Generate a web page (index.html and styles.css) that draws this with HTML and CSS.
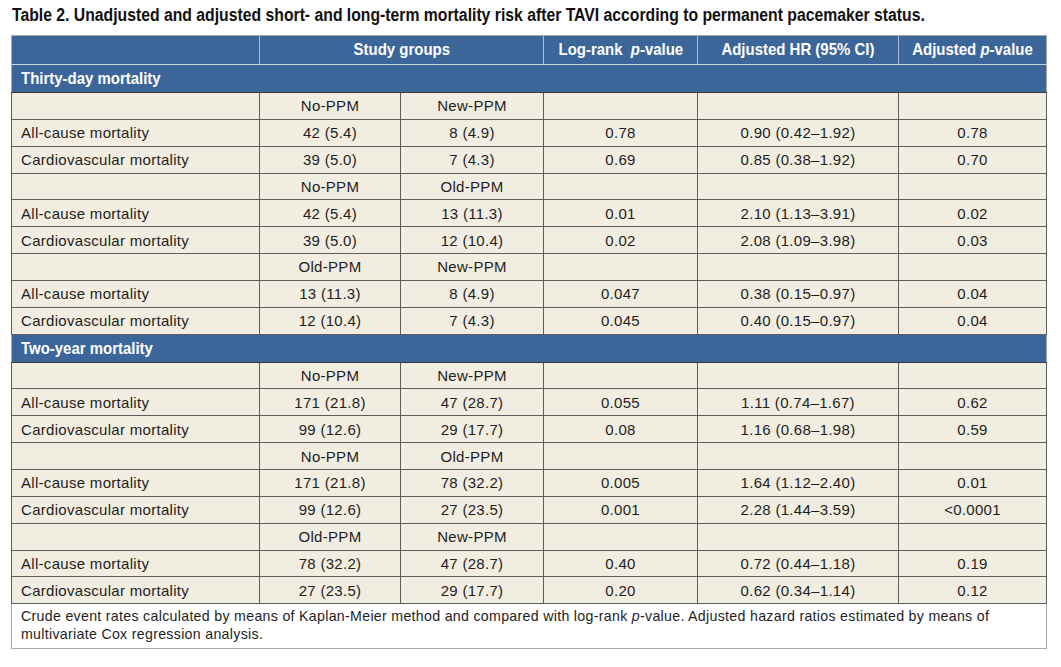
FILE: index.html
```html
<!DOCTYPE html>
<html lang="en">
<head>
<meta charset="utf-8">
<title>Table 2</title>
<link rel="stylesheet" href="styles.css">
</head>
<body>
<h1 class="caption"><span class="cond cond-left">Table 2. Unadjusted and adjusted short- and long-term mortality risk after TAVI according to permanent pacemaker status.</span></h1>
<table class="data">
  <colgroup>
    <col class="c-label"><col class="c-g1"><col class="c-g2"><col class="c-lr"><col class="c-hr"><col class="c-ap">
  </colgroup>
  <thead>
    <tr class="head">
      <th></th>
      <th colspan="2"><span class="cond">Study groups</span></th>
      <th><span class="cond">Log-rank&nbsp; <i>p</i>-value</span></th>
      <th><span class="cond">Adjusted HR (95% CI)</span></th>
      <th><span class="cond">Adjusted <i>p</i>-value</span></th>
    </tr>
  </thead>
  <tbody>
    <tr class="section"><td colspan="6"><span class="cond cond-left">Thirty-day mortality</span></td></tr>
    <tr><td></td><td>No-PPM</td><td>New-PPM</td><td></td><td></td><td></td></tr>
    <tr><td>All-cause mortality</td><td>42 (5.4)</td><td>8 (4.9)</td><td>0.78</td><td>0.90 (0.42–1.92)</td><td>0.78</td></tr>
    <tr><td>Cardiovascular mortality</td><td>39 (5.0)</td><td>7 (4.3)</td><td>0.69</td><td>0.85 (0.38–1.92)</td><td>0.70</td></tr>
    <tr><td></td><td>No-PPM</td><td>Old-PPM</td><td></td><td></td><td></td></tr>
    <tr><td>All-cause mortality</td><td>42 (5.4)</td><td>13 (11.3)</td><td>0.01</td><td>2.10 (1.13–3.91)</td><td>0.02</td></tr>
    <tr><td>Cardiovascular mortality</td><td>39 (5.0)</td><td>12 (10.4)</td><td>0.02</td><td>2.08 (1.09–3.98)</td><td>0.03</td></tr>
    <tr><td></td><td>Old-PPM</td><td>New-PPM</td><td></td><td></td><td></td></tr>
    <tr><td>All-cause mortality</td><td>13 (11.3)</td><td>8 (4.9)</td><td>0.047</td><td>0.38 (0.15–0.97)</td><td>0.04</td></tr>
    <tr><td>Cardiovascular mortality</td><td>12 (10.4)</td><td>7 (4.3)</td><td>0.045</td><td>0.40 (0.15–0.97)</td><td>0.04</td></tr>
    <tr class="section"><td colspan="6"><span class="cond cond-left">Two-year mortality</span></td></tr>
    <tr><td></td><td>No-PPM</td><td>New-PPM</td><td></td><td></td><td></td></tr>
    <tr><td>All-cause mortality</td><td>171 (21.8)</td><td>47 (28.7)</td><td>0.055</td><td>1.11 (0.74–1.67)</td><td>0.62</td></tr>
    <tr><td>Cardiovascular mortality</td><td>99 (12.6)</td><td>29 (17.7)</td><td>0.08</td><td>1.16 (0.68–1.98)</td><td>0.59</td></tr>
    <tr><td></td><td>No-PPM</td><td>Old-PPM</td><td></td><td></td><td></td></tr>
    <tr><td>All-cause mortality</td><td>171 (21.8)</td><td>78 (32.2)</td><td>0.005</td><td>1.64 (1.12–2.40)</td><td>0.01</td></tr>
    <tr><td>Cardiovascular mortality</td><td>99 (12.6)</td><td>27 (23.5)</td><td>0.001</td><td>2.28 (1.44–3.59)</td><td>&lt;0.0001</td></tr>
    <tr><td></td><td>Old-PPM</td><td>New-PPM</td><td></td><td></td><td></td></tr>
    <tr><td>All-cause mortality</td><td>78 (32.2)</td><td>47 (28.7)</td><td>0.40</td><td>0.72 (0.44–1.18)</td><td>0.19</td></tr>
    <tr><td>Cardiovascular mortality</td><td>27 (23.5)</td><td>29 (17.7)</td><td>0.20</td><td>0.62 (0.34–1.14)</td><td>0.12</td></tr>
  </tbody>
  <tfoot>
    <tr class="note"><td colspan="6">Crude event rates calculated by means of Kaplan-Meier method and compared with log-rank <i>p</i>-value. Adjusted hazard ratios estimated by means of multivariate Cox regression analysis.</td></tr>
  </tfoot>
</table>
</body>
</html>
```
FILE: styles.css
```css
html, body {
  margin: 0;
  padding: 0;
  background: #ffffff;
}

body {
  padding: 5px 0 0 11px;
  font-family: "Liberation Sans", Arial, sans-serif;
  color: #1e1e1e;
}

/* condensed look: no condensed family is installed, so squeeze a bold sans */
.cond {
  display: inline-block;
  white-space: nowrap;
  transform: scaleX(0.88);
  transform-origin: center;
}

.cond-left {
  transform-origin: left center;
}

.caption {
  margin: 0 0 9px 1px;
  font-family: "Liberation Sans", Arial, sans-serif;
  font-weight: bold;
  font-size: 18px;
  line-height: 21px;
  color: #111;
  white-space: nowrap;
}

.caption .cond {
  transform: scaleX(0.875);
}

.data {
  border-collapse: collapse;
  table-layout: fixed;
  width: 1035px;
  border: 1px solid #a8a8a8;
  font-size: 15px;
  letter-spacing: 0.3px;
}

.c-label { width: 248px; }
.c-g1 { width: 141px; }
.c-g2 { width: 143px; }
.c-lr { width: 154px; }
.c-hr { width: 201px; }
.c-ap { width: 148px; }

.data td {
  height: 25.85px;
  padding: 0;
  text-align: center;
  vertical-align: middle;
  background: #f1ede0;
  border: 1px solid #5e5e5e;
  line-height: 17px;
}

.data td:first-child {
  text-align: left;
  padding-left: 9px;
}

.head th {
  height: 28px;
  padding: 0;
  background: #3c6699;
  color: #ffffff;
  font-weight: bold;
  font-size: 17px;
  letter-spacing: 0;
  text-align: center;
  vertical-align: middle;
  border-left: 1px solid #a9bbd2;
  border-right: 1px solid #a9bbd2;
  border-top: 1px solid #a8a8a8;
  border-bottom: 1px solid #c9d3df;
}

.head th:first-child { border-left: 1px solid #a8a8a8; }
.head th:last-child { border-right: 1px solid #a8a8a8; }

.data .section td {
  height: 27px;
  background: #3c6699;
  color: #ffffff;
  font-weight: bold;
  font-size: 17px;
  letter-spacing: 0;
  border-left: 1px solid #a8a8a8;
  border-right: 1px solid #a8a8a8;
  border-bottom: 1px solid #3a3a3a;
  padding-left: 9px;
}

.data .note td {
  height: auto;
  background: #ffffff;
  text-align: left;
  font-size: 14.2px;
  padding: 3px 9px 5px 9px;
  line-height: 18px;
  border: 1px solid #a8a8a8;
  border-top: 1px solid #5e5e5e;
}
```
